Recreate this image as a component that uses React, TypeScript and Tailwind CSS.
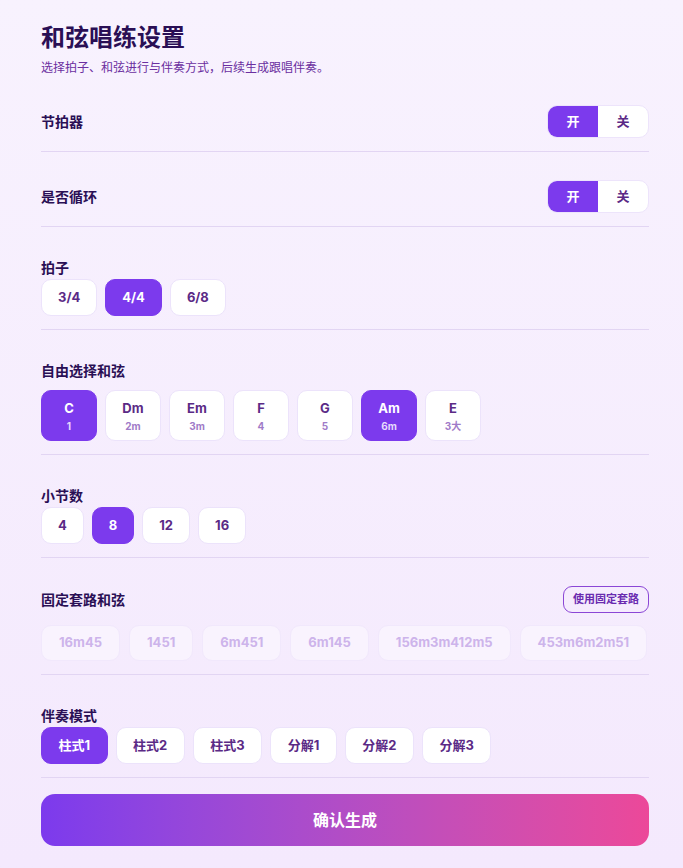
import { useState } from "react"

const font = { fontFamily: 'Inter, "Noto Sans CJK SC", sans-serif' }

const chords = [
  { name: "C", degree: "1" },
  { name: "Dm", degree: "2m" },
  { name: "Em", degree: "3m" },
  { name: "F", degree: "4" },
  { name: "G", degree: "5" },
  { name: "Am", degree: "6m" },
  { name: "E", degree: "3大" },
]

const presets = ["16m45", "1451", "6m451", "6m145", "156m3m412m5", "453m6m2m51"]

function Toggle({ on, onChange }: { on: boolean; onChange: (v: boolean) => void }) {
  return (
    <div className="flex h-[33px] w-[102px] overflow-hidden rounded-[10px] border border-[#ede4fb] bg-white text-[13px] font-bold">
      <button
        onClick={() => onChange(true)}
        className={on ? "flex-1 bg-[#7c3aed] text-white" : "flex-1 text-[#5b2a86]"}
      >
        开
      </button>
      <button
        onClick={() => onChange(false)}
        className={!on ? "flex-1 bg-[#7c3aed] text-white" : "flex-1 text-[#5b2a86]"}
      >
        关
      </button>
    </div>
  )
}

function Pill({
  label,
  active,
  onClick,
  wide,
}: {
  label: string
  active: boolean
  onClick: () => void
  wide?: boolean
}) {
  const base = active
    ? "h-[37px] rounded-[10px] border border-[#7c3aed] bg-[#7c3aed] text-[13px] font-bold text-white"
    : "h-[37px] rounded-[10px] border border-[#ece3fb] bg-white text-[13px] font-bold text-[#5b2a86]"
  return (
    <button onClick={onClick} className={base + (wide ? " px-[16.5px]" : " px-4")}>
      {label}
    </button>
  )
}

export default function App() {
  const [metronome, setMetronome] = useState(true)
  const [loop, setLoop] = useState(true)
  const [meter, setMeter] = useState("4/4")
  const [picked, setPicked] = useState<string[]>(["C", "Am"])
  const [bars, setBars] = useState("8")
  const [mode, setMode] = useState("柱式1")

  const toggleChord = (name: string) =>
    setPicked((p) => (p.includes(name) ? p.filter((c) => c !== name) : [...p, name]))

  return (
    <div style={font} className="min-h-[868px] bg-gradient-to-b from-[#f8f2fe] to-[#f4e9fd] pl-[41px] pr-[34px] pt-[22px] pb-[22px]">
      <h1 className="text-[24px] font-bold leading-[32px] text-[#2a0f55]">和弦唱练设置</h1>
      <p className="mt-[5px] text-[12px] leading-[18px] text-[#6b2fa0]">
        选择拍子、和弦进行与伴奏方式，后续生成跟唱伴奏。
      </p>

      {/* 开关 */}
      <div className="flex items-center justify-between border-b border-[#e2d5f3] pt-[28px] pb-[13px]">
        <span className="text-[14px] font-bold text-[#2a0f55]">节拍器</span>
        <Toggle on={metronome} onChange={setMetronome} />
      </div>
      <div className="flex items-center justify-between border-b border-[#e2d5f3] pt-[28px] pb-[13px]">
        <span className="text-[14px] font-bold text-[#2a0f55]">是否循环</span>
        <Toggle on={loop} onChange={setLoop} />
      </div>

      {/* 拍子 */}
      <div className="border-b border-[#e2d5f3] pt-[30px] pb-[13px]">
        <div className="text-[14px] font-bold leading-[22px] text-[#2a0f55]">拍子</div>
        <div className="flex gap-2">
          {["3/4", "4/4", "6/8"].map((m) => (
            <Pill key={m} label={m} active={meter === m} onClick={() => setMeter(m)} />
          ))}
        </div>
      </div>

      {/* 和弦 */}
      <div className="border-b border-[#e2d5f3] pt-[30px] pb-[13px]">
        <div className="text-[14px] font-bold leading-[22px] text-[#2a0f55]">自由选择和弦</div>
        <div className="mt-2 flex gap-2">
          {chords.map((c) => {
            const on = picked.includes(c.name)
            return (
              <button
                key={c.name}
                onClick={() => toggleChord(c.name)}
                className={
                  on
                    ? "flex h-[51px] w-14 flex-col items-center justify-center rounded-[10px] border border-[#7c3aed] bg-[#7c3aed] text-white"
                    : "flex h-[51px] w-14 flex-col items-center justify-center rounded-[10px] border border-[#ece3fb] bg-white text-[#5b2a86]"
                }
              >
                <span className="text-[13px] font-bold leading-[17px]">{c.name}</span>
                <span className={on ? "mt-[3px] text-[10px] font-bold leading-[12px] text-[#e6dafc]" : "mt-[3px] text-[10px] font-bold leading-[12px] text-[#9f7bc8]"}>
                  {c.degree}
                </span>
              </button>
            )
          })}
        </div>
      </div>

      {/* 小节数 */}
      <div className="border-b border-[#e2d5f3] pt-[30px] pb-[13px]">
        <div className="text-[14px] font-bold leading-[22px] text-[#2a0f55]">小节数</div>
        <div className="flex gap-2">
          {["4", "8", "12", "16"].map((b) => (
            <Pill key={b} label={b} active={bars === b} onClick={() => setBars(b)} />
          ))}
        </div>
      </div>

      {/* 固定套路 */}
      <div className="border-b border-[#e2d5f3] pt-[28px] pb-[13px]">
        <div className="flex items-center justify-between">
          <span className="text-[14px] font-bold text-[#2a0f55]">固定套路和弦</span>
          <button className="h-[27px] rounded-[9px] border border-[#8b46d6] px-[9px] text-[11px] font-bold text-[#6a2bb0]">
            使用固定套路
          </button>
        </div>
        <div className="mt-3 flex gap-[9px]">
          {presets.map((p) => (
            <span
              key={p}
              className="flex h-[36px] items-center rounded-[10px] border border-[#f1e8fc] bg-white/40 px-[17px] text-[13px] font-bold text-[#cdb4eb]"
            >
              {p}
            </span>
          ))}
        </div>
      </div>

      {/* 伴奏模式 */}
      <div className="border-b border-[#e2d5f3] pt-[30px] pb-[13px]">
        <div className="text-[14px] font-bold leading-[22px] text-[#2a0f55]">伴奏模式</div>
        <div className="flex gap-2">
          {["柱式1", "柱式2", "柱式3", "分解1", "分解2", "分解3"].map((m) => (
            <Pill key={m} label={m} wide active={mode === m} onClick={() => setMode(m)} />
          ))}
        </div>
      </div>

      <button className="mt-4 h-[52px] w-full rounded-[14px] bg-gradient-to-r from-[#7c3aed] to-[#ec4899] text-[16px] font-bold text-white">
        确认生成
      </button>
    </div>
  )
}
